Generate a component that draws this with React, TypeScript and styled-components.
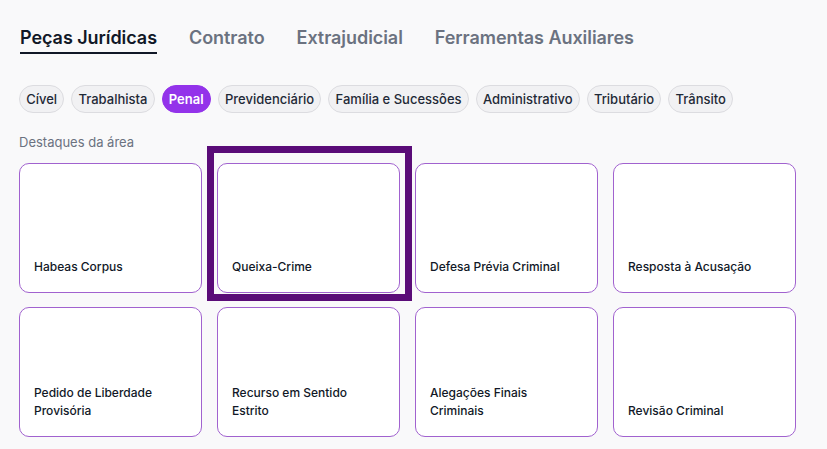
import React, { useState } from 'react';
import styled, { createGlobalStyle } from 'styled-components';

const GlobalStyle = createGlobalStyle`
  html, body {
    margin: 0;
    padding: 0;
    background: #f9f9fa;
    font-family: Inter, "Noto Sans", sans-serif;
    color: #111827;
  }
  * {
    box-sizing: border-box;
  }
`;

const Page = styled.div`
  position: relative;
  padding: 28px 20px 0 19px;
  min-height: 449px;
`;

const TabBar = styled.nav`
  display: flex;
  gap: 32px;
  padding-left: 1px;
`;

const Tab = styled.button<{ $active?: boolean }>`
  font-family: inherit;
  font-size: 18px;
  font-weight: 600;
  letter-spacing: -0.06px;
  background: none;
  border: none;
  padding: 0 0 4px;
  cursor: pointer;
  color: ${p => (p.$active ? '#111827' : '#6b7280')};
  border-bottom: 2px solid ${p => (p.$active ? '#111827' : 'transparent')};
  line-height: 20px;
`;

const ChipRow = styled.div`
  display: flex;
  gap: 7px;
  margin-top: 31px;
`;

const Chip = styled.button<{ $active?: boolean }>`
  font-family: inherit;
  font-size: 13px;
  height: 28px;
  padding: 0 6.2px;
  border-radius: 14px;
  cursor: pointer;
  border: 1px solid ${p => (p.$active ? '#9333ea' : '#dcdce0')};
  background: ${p => (p.$active ? '#9333ea' : '#f1f1f3')};
  color: ${p => (p.$active ? '#ffffff' : '#1f2937')};
  font-weight: ${p => (p.$active ? 600 : 500)};
`;

const SectionLabel = styled.div`
  font-size: 13px;
  color: #6b7280;
  margin-top: 20px;
  line-height: 18px;
`;

const CardGrid = styled.div`
  display: grid;
  grid-template-columns: repeat(4, 183px);
  grid-auto-rows: 130px;
  column-gap: 15px;
  row-gap: 14px;
  margin-top: 12px;
`;

const Card = styled.button`
  font-family: inherit;
  display: flex;
  align-items: flex-end;
  text-align: left;
  background: #ffffff;
  border: 1px solid #a162cf;
  border-radius: 10px;
  padding: 0 14px 16px;
  cursor: pointer;
`;

const CardTitle = styled.span`
  font-size: 12px;
  font-weight: 500;
  line-height: 18px;
  color: #111827;
`;

const Highlight = styled.div`
  position: absolute;
  left: 207px;
  top: 146px;
  width: 205px;
  height: 155px;
  border: 7px solid #5a0c78;
  pointer-events: none;
`;

const tabs = ['Peças Jurídicas', 'Contrato', 'Extrajudicial', 'Ferramentas Auxiliares'];

const areas = [
  'Cível',
  'Trabalhista',
  'Penal',
  'Previdenciário',
  'Família e Sucessões',
  'Administrativo',
  'Tributário',
  'Trânsito',
];

const pecasPenais = [
  'Habeas Corpus',
  'Queixa-Crime',
  'Defesa Prévia Criminal',
  'Resposta à Acusação',
  'Pedido de Liberdade Provisória',
  'Recurso em Sentido Estrito',
  'Alegações Finais Criminais',
  'Revisão Criminal',
];

const App: React.FC = () => {
  const [tab, setTab] = useState(tabs[0]);
  const [area, setArea] = useState('Penal');

  return (
    <>
      <GlobalStyle />
      <Page>
        <TabBar>
          {tabs.map(t => (
            <Tab key={t} $active={t === tab} onClick={() => setTab(t)}>
              {t}
            </Tab>
          ))}
        </TabBar>

        <ChipRow>
          {areas.map(a => (
            <Chip key={a} $active={a === area} onClick={() => setArea(a)}>
              {a}
            </Chip>
          ))}
        </ChipRow>

        <SectionLabel>Destaques da área</SectionLabel>

        <CardGrid>
          {pecasPenais.map(p => (
            <Card key={p}>
              <CardTitle>{p}</CardTitle>
            </Card>
          ))}
        </CardGrid>

        <Highlight />
      </Page>
    </>
  );
};

export default App;
